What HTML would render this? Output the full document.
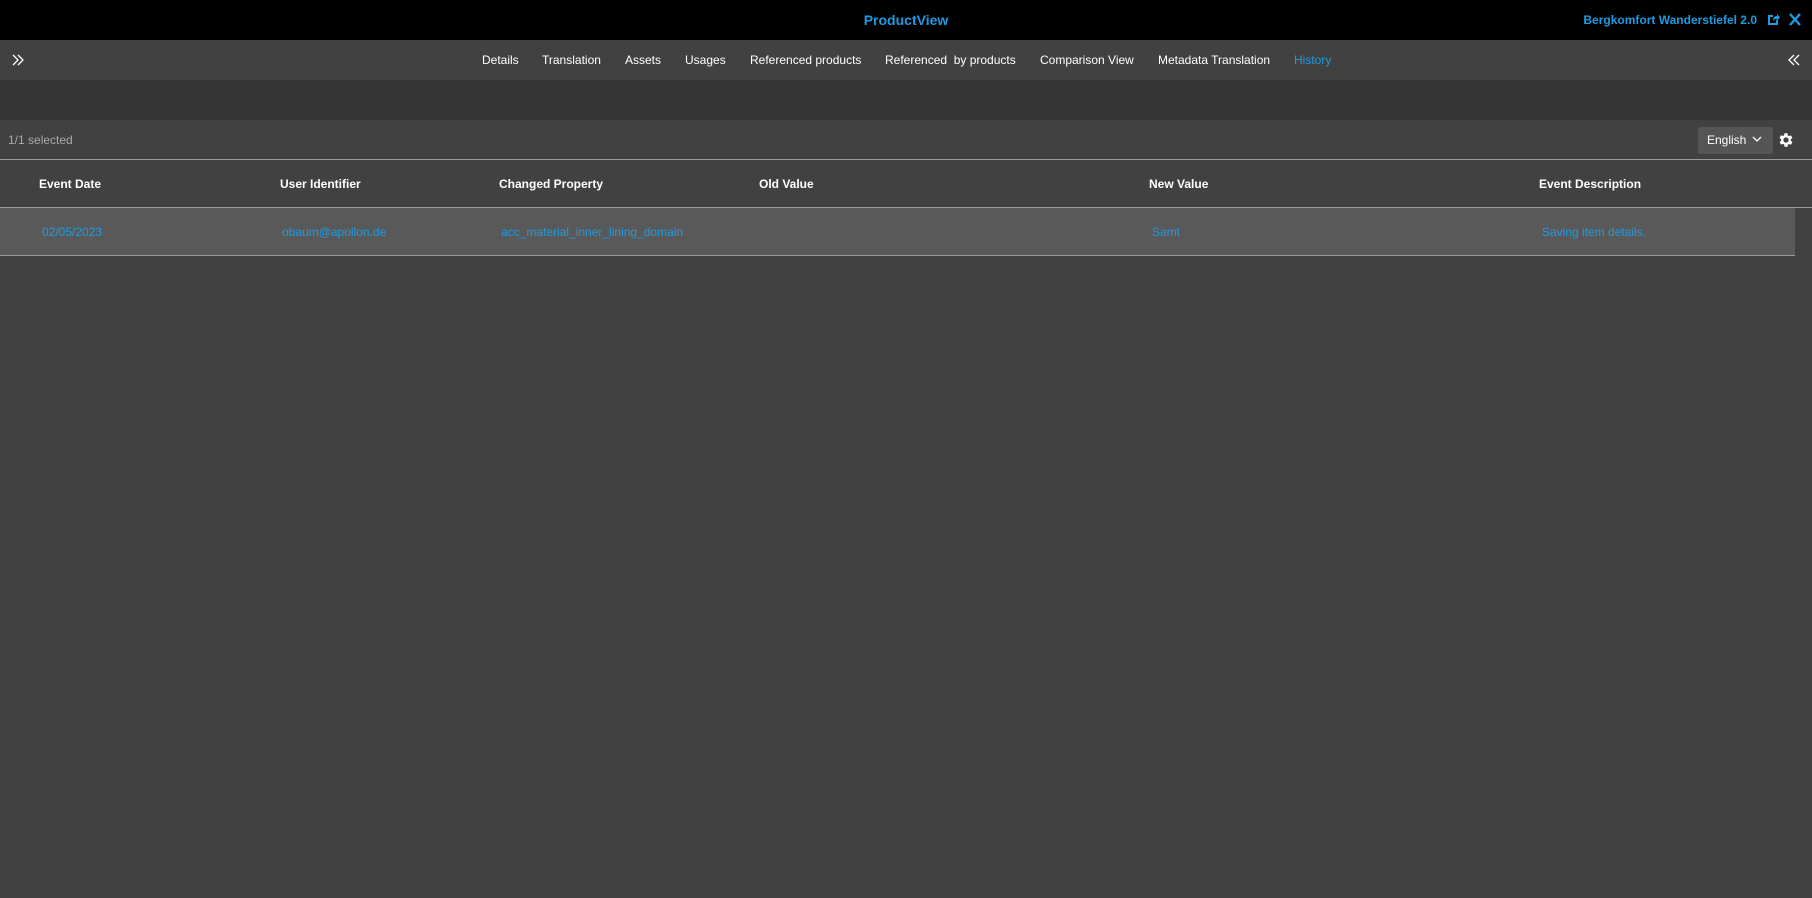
<!DOCTYPE html>
<html><head><meta charset="utf-8"><style>
*{margin:0;padding:0;box-sizing:border-box}
body{width:1812px;height:898px;background:#414141;font-family:"Liberation Sans",Arial,sans-serif;font-size:12px;color:#fff;position:relative;overflow:hidden}
.a{position:absolute;white-space:nowrap}
.blue{color:#1e9be0}
</style></head><body>
<div class="a" style="left:0;top:0;width:1812px;height:40px;background:#000"></div>
<div class="a blue" style="left:0;width:1812px;top:12px;text-align:center;font-weight:bold;font-size:14px">ProductView</div>
<div class="a blue" style="right:55px;top:13px;font-weight:bold;font-size:12px">Bergkomfort Wanderstiefel 2.0</div>
<svg class="a" style="left:1766px;top:12px" width="14" height="14" viewBox="0 0 14 14"><path d="M2 3h5v2H4v6h6V8h2v5H2z" fill="#1e9be0"/><path d="M7 9c0-4 2-5 4-5V2l3 3.5L11 9V7c-2 0-3 0-4 2z" fill="#1e9be0"/></svg>
<svg class="a" style="left:1789px;top:13px" width="12" height="13" viewBox="0 0 12 13"><path d="M1 1l10 11M11 1L1 12" stroke="#1e9be0" stroke-width="2.4"/></svg>
<div class="a" style="left:0;top:40px;width:1812px;height:40px;background:#414141"></div>
<svg class="a" style="left:11px;top:53px" width="14" height="14" viewBox="0 0 14 14"><path d="M2 2l5 5-5 5M7 2l5 5-5 5" stroke="#fff" stroke-width="1.3" fill="none"/></svg>
<svg class="a" style="left:1787px;top:53px" width="14" height="14" viewBox="0 0 14 14"><path d="M7 2L2 7l5 5M12 2L7 7l5 5" stroke="#fff" stroke-width="1.3" fill="none"/></svg>
<div class="a" style="top:53px;left:482px">Details</div>
<div class="a" style="top:53px;left:542px">Translation</div>
<div class="a" style="top:53px;left:625px">Assets</div>
<div class="a" style="top:53px;left:685px">Usages</div>
<div class="a" style="top:53px;left:750px">Referenced products</div>
<div class="a" style="top:53px;left:885px">Referenced&nbsp; by products</div>
<div class="a" style="top:53px;left:1040px">Comparison View</div>
<div class="a" style="top:53px;left:1158px">Metadata Translation</div>
<div class="a blue" style="top:53px;left:1294px">History</div>
<div class="a" style="left:0;top:80px;width:1812px;height:40px;background:#353535"></div>
<div class="a" style="left:8px;top:133px;color:#aaa">1/1 selected</div>
<div class="a" style="left:1698px;top:127px;width:75px;height:27px;background:#555;border-radius:2px"></div>
<div class="a" style="left:1707px;top:133px">English</div>
<svg class="a" style="left:1752px;top:135px" width="10" height="8" viewBox="0 0 10 8"><path d="M1 2l4 4 4-4" stroke="#fff" stroke-width="1.3" fill="none"/></svg>
<svg class="a" style="left:1777px;top:131px" width="18" height="18" viewBox="0 0 24 24"><path fill="#fff" d="M19.4 13a7.5 7.5 0 000-2l2.1-1.6-2-3.5-2.5 1a7 7 0 00-1.7-1L15 3h-4l-.4 2.7a7 7 0 00-1.7 1l-2.5-1-2 3.5L6.6 11a7.5 7.5 0 000 2l-2.1 1.6 2 3.5 2.5-1a7 7 0 001.7 1L11 21h4l.4-2.7a7 7 0 001.7-1l2.5 1 2-3.5zM13 15.5a3.5 3.5 0 110-7 3.5 3.5 0 010 7z" transform="translate(-1 0)"/></svg>
<div class="a" style="left:0;top:159px;width:1812px;height:1px;background:#999"></div>
<div class="a" style="top:177px;left:39px;font-weight:bold">Event Date</div>
<div class="a" style="top:177px;left:280px;font-weight:bold">User Identifier</div>
<div class="a" style="top:177px;left:499px;font-weight:bold">Changed Property</div>
<div class="a" style="top:177px;left:759px;font-weight:bold">Old Value</div>
<div class="a" style="top:177px;left:1149px;font-weight:bold">New Value</div>
<div class="a" style="top:177px;left:1539px;font-weight:bold">Event Description</div>
<div class="a" style="left:0;top:207px;width:1812px;height:1px;background:#999"></div>
<div class="a" style="left:0;top:208px;width:1795px;height:47px;background:#595959"></div>
<div class="a" style="left:0;top:255px;width:1795px;height:1px;background:#999"></div>
<div class="a blue" style="top:225px;left:42px">02/05/2023</div>
<div class="a blue" style="top:225px;left:282px">obaum@apollon.de</div>
<div class="a blue" style="top:225px;left:501px">acc_material_inner_lining_domain</div>
<div class="a blue" style="top:225px;left:1152px">Samt</div>
<div class="a blue" style="top:225px;left:1542px">Saving item details.</div>
</body></html>
